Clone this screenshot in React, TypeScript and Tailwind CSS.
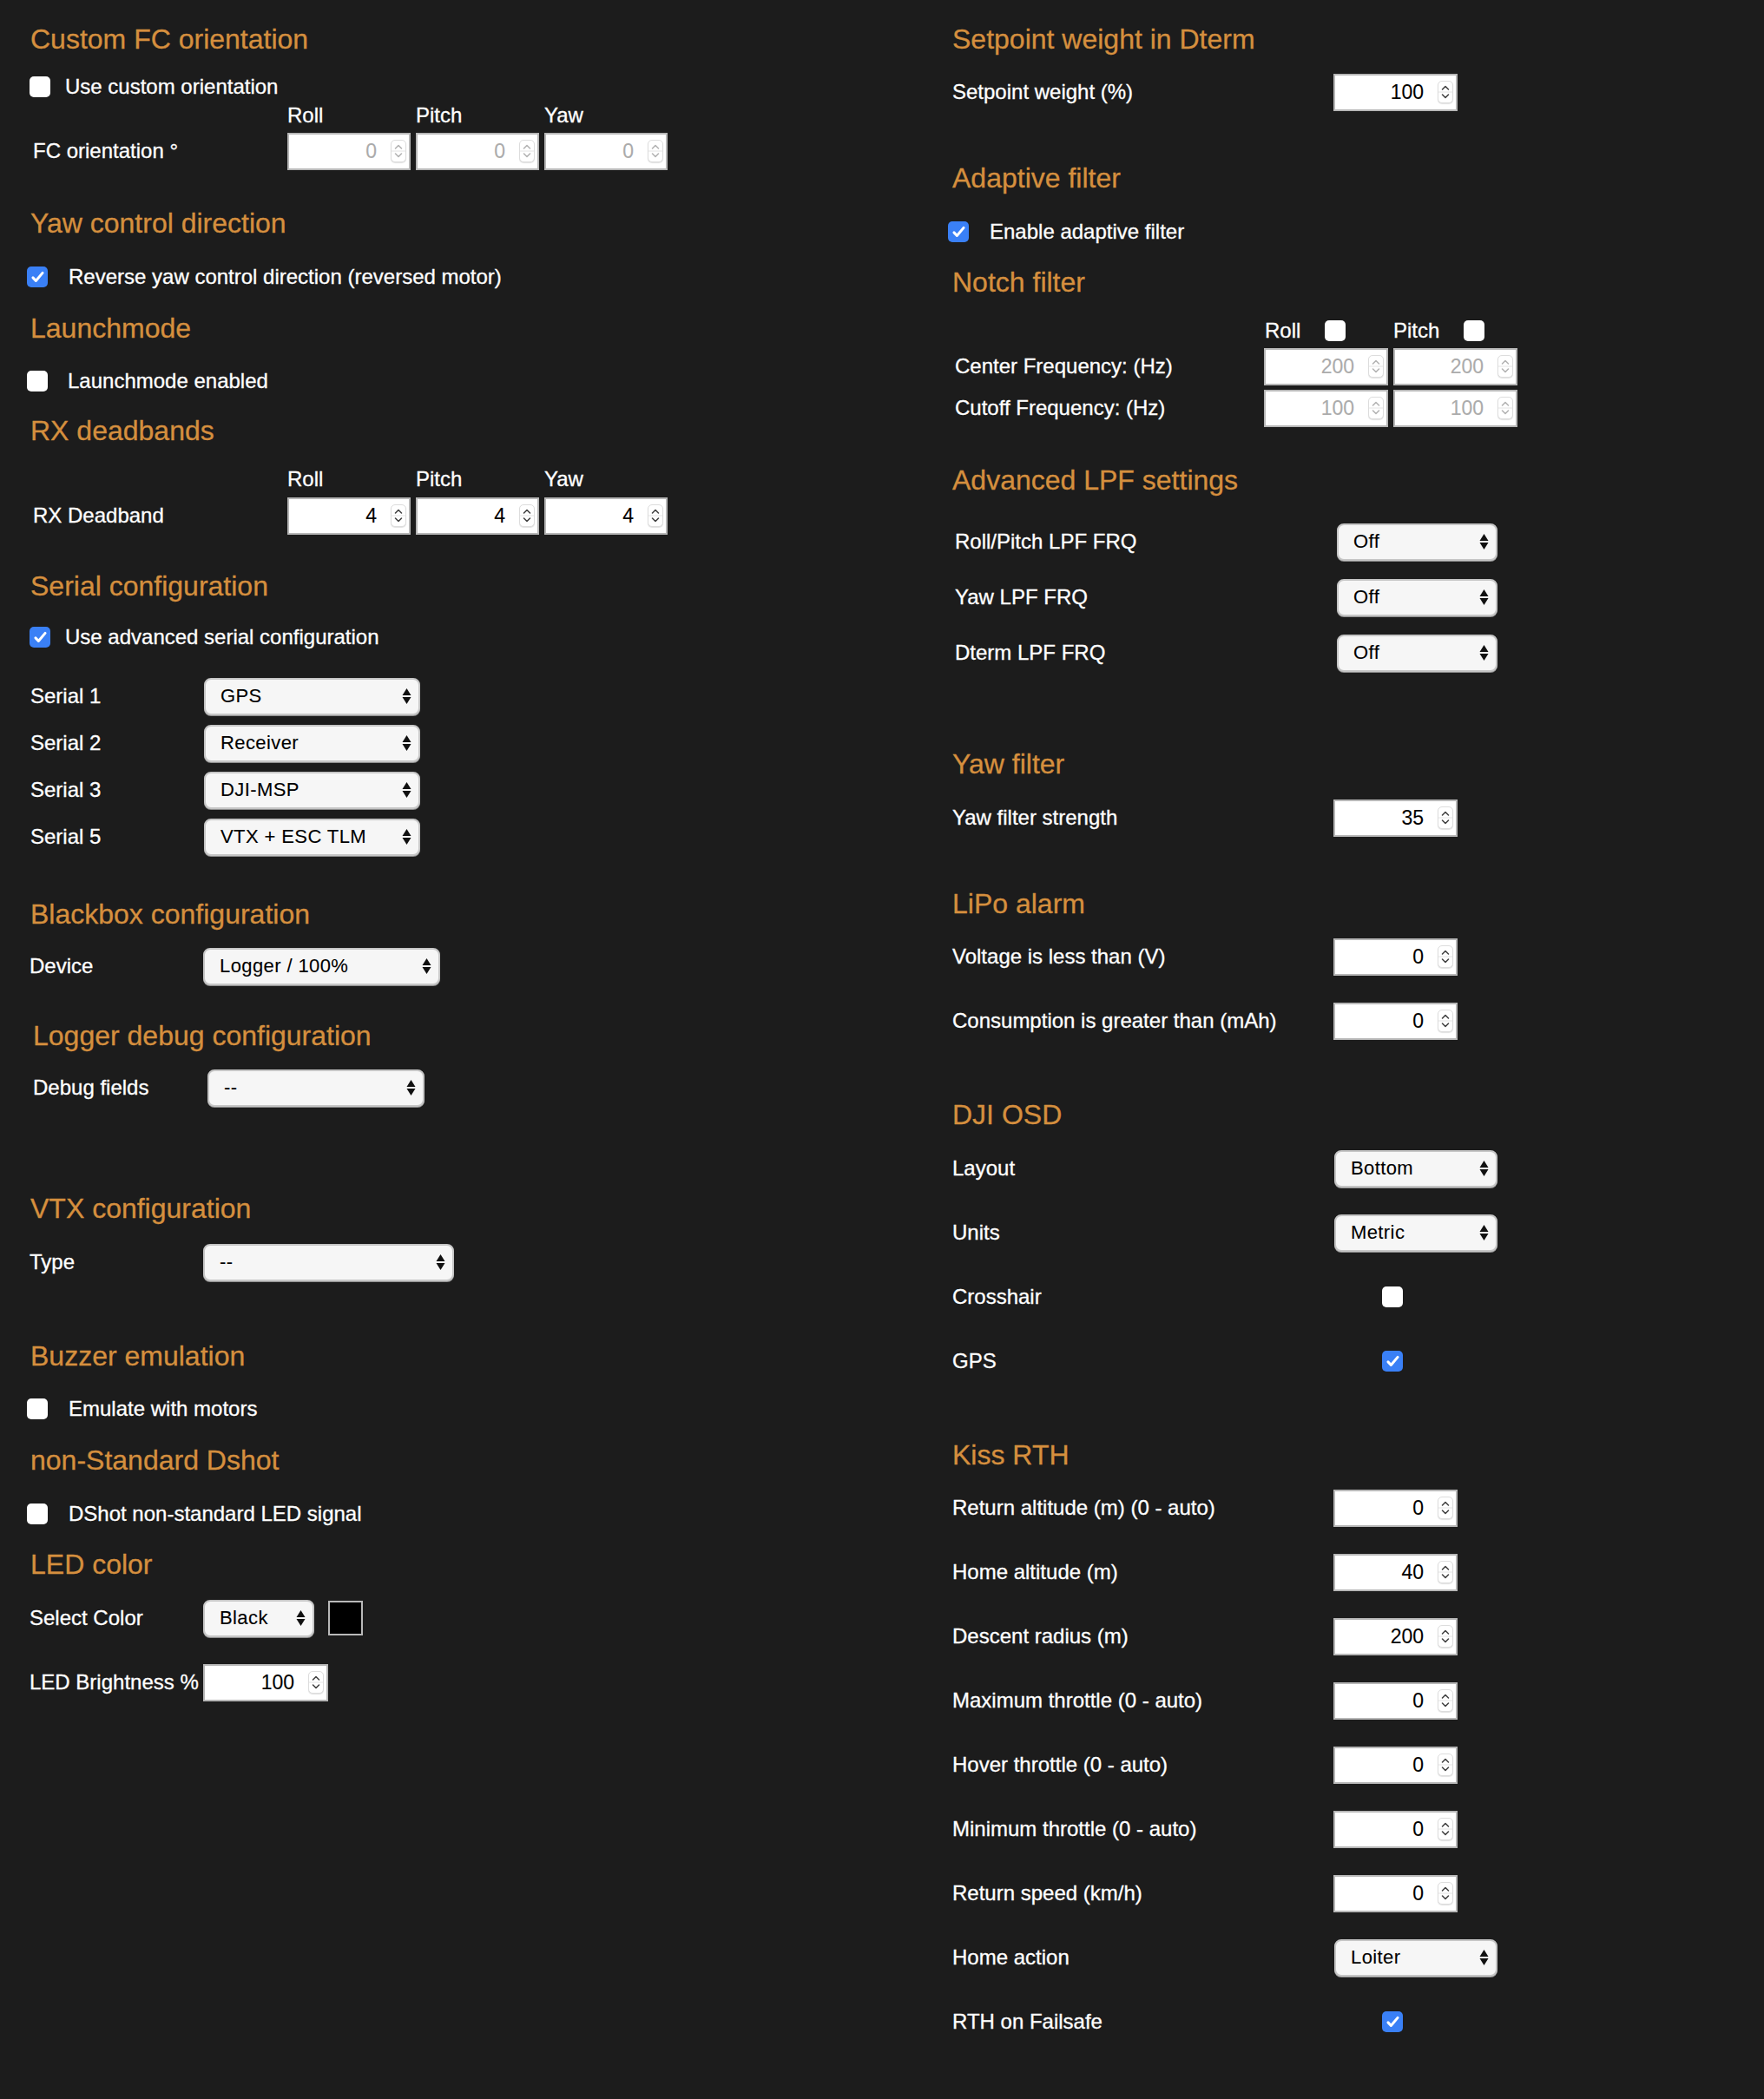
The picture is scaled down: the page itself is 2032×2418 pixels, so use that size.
import React from 'react'

function Check({ checked = false }: { checked?: boolean }) {
    if (checked) {
        return (
            <span className="flex h-[24px] w-[24px] shrink-0 items-center justify-center rounded-[5px] bg-[#3a80f6]">
                <svg viewBox="0 0 24 24" className="h-[19px] w-[19px]">
                    <path d="M5 12.5l4.3 4.5L19 5.5" fill="none" stroke="white" strokeWidth="3.8" strokeLinecap="round" strokeLinejoin="round" />
                </svg>
            </span>
        )
    }
    return <span className="block h-[24px] w-[24px] shrink-0 rounded-[5px] bg-white" />
}

function Spinner({ disabled = false }: { disabled?: boolean }) {
    const c = disabled ? '#b4b4b4' : '#444'
    return (
        <span className="block h-[26px] w-[18px] shrink-0 rounded-[5px] border border-[#dddddd] bg-white shadow-[0_1px_1px_rgba(0,0,0,0.12)]">
            <svg viewBox="0 0 16 24" className="block h-full w-full">
                <path d="M4.5 9L8 5.5 11.5 9" fill="none" stroke={c} strokeWidth="1.6" strokeLinecap="round" strokeLinejoin="round" />
                <line x1="0" y1="12" x2="16" y2="12" stroke="#e4e4e4" strokeWidth="1" />
                <path d="M4.5 15L8 18.5 11.5 15" fill="none" stroke={c} strokeWidth="1.6" strokeLinecap="round" strokeLinejoin="round" />
            </svg>
        </span>
    )
}

function NumInput({ value, disabled = false, w = 'w-[143px]' }: { value: string; disabled?: boolean; w?: string }) {
    return (
        <div className={`flex h-[43px] ${w} shrink-0 items-center justify-end border-2 border-[#b7b7b7] bg-white pr-[3px] [-webkit-text-stroke:0.1px]`}>
            <span className={`mr-[16px] text-[23px] leading-none ${disabled ? 'text-[#ababab]' : 'text-black'}`}>{value}</span>
            <Spinner disabled={disabled} />
        </div>
    )
}

function Select({ value, w }: { value: string; w: string }) {
    return (
        <div className={`flex h-[43px] ${w} shrink-0 items-center justify-between rounded-[8px] border-2 border-[#c6c6c6] bg-[#f6f6f6] pl-[17px] pr-[8px] text-[22px] leading-none tracking-[0.4px] text-black shadow-[0_1px_0_#8e8e8e] [-webkit-text-stroke:0.1px]`}>
            <span>{value}</span>
            <svg viewBox="0 0 11 20" className="h-[20px] w-[11px]">
                <path d="M5.5 1L10.5 9H0.5z M5.5 19L0.5 11h10z" fill="#111" />
            </svg>
        </div>
    )
}

function H({ children, mt, pl = 'pl-[35px]' }: { children: React.ReactNode; mt: string; pl?: string }) {
    return <h2 className={`${mt} ${pl} flex h-[40px] items-center whitespace-nowrap text-[32px] leading-none text-[#d58f3e]`}>{children}</h2>
}

function CheckRow({ label, checked = false, mt, pl, gap }: { label: string; checked?: boolean; mt: string; pl: string; gap: string }) {
    return (
        <div className={`${mt} ${pl} flex h-[30px] items-center ${gap} text-[24px] leading-none`}>
            <Check checked={checked} />
            <span className="whitespace-nowrap">{label}</span>
        </div>
    )
}

function Row({ label, mt, lw, children, h = 'h-[44px]' }: { label: string; mt: string; lw: string; children: React.ReactNode; h?: string }) {
    return (
        <div className={`${mt} flex ${h} items-center text-[24px] leading-none`}>
            <span className={`${lw} shrink-0 whitespace-nowrap`}>{label}</span>
            {children}
        </div>
    )
}

const axes = ['Roll', 'Pitch', 'Yaw']

function AxisLabels({ mt }: { mt: string }) {
    return (
        <div className={`${mt} flex h-[26px] items-center pl-[331px] text-[24px] leading-none`}>
            {axes.map(a => <span key={a} className="w-[148px]">{a}</span>)}
        </div>
    )
}

function LeftColumn() {
    return (
        <div className="w-[1090px] shrink-0">
            <H mt="mt-[25px]">Custom FC orientation</H>
            <CheckRow mt="mt-[20px]" pl="pl-[34px]" gap="gap-[17px]" label="Use custom orientation" />
            <AxisLabels mt="mt-[5px]" />
            <Row mt="mt-[6px]" lw="w-[331px] pl-[38px]" label="FC orientation °">
                <div className="flex gap-[6px]">
                    <NumInput value="0" disabled w="w-[142px]" />
                    <NumInput value="0" disabled w="w-[142px]" />
                    <NumInput value="0" disabled w="w-[142px]" />
                </div>
            </Row>

            <H mt="mt-[41px]">Yaw control direction</H>
            <CheckRow mt="mt-[27px]" pl="pl-[31px]" gap="gap-[24px]" label="Reverse yaw control direction (reversed motor)" checked />

            <H mt="mt-[24px]">Launchmode</H>
            <CheckRow mt="mt-[26px]" pl="pl-[31px]" gap="gap-[23px]" label="Launchmode enabled" />

            <H mt="mt-[22px]">RX deadbands</H>
            <AxisLabels mt="mt-[23px]" />
            <Row mt="mt-[7px]" lw="w-[331px] pl-[38px]" label="RX Deadband">
                <div className="flex gap-[6px]">
                    <NumInput value="4" w="w-[142px]" />
                    <NumInput value="4" w="w-[142px]" />
                    <NumInput value="4" w="w-[142px]" />
                </div>
            </Row>

            <H mt="mt-[39px]">Serial configuration</H>
            <CheckRow mt="mt-[24px]" pl="pl-[34px]" gap="gap-[17px]" label="Use advanced serial configuration" checked />
            <Row mt="mt-[31px]" lw="w-[235px] pl-[35px]" label="Serial 1"><Select value="GPS" w="w-[249px]" /></Row>
            <Row mt="mt-[10px]" lw="w-[235px] pl-[35px]" label="Serial 2"><Select value="Receiver" w="w-[249px]" /></Row>
            <Row mt="mt-[10px]" lw="w-[235px] pl-[35px]" label="Serial 3"><Select value="DJI-MSP" w="w-[249px]" /></Row>
            <Row mt="mt-[10px]" lw="w-[235px] pl-[35px]" label="Serial 5"><Select value="VTX + ESC TLM" w="w-[249px]" /></Row>

            <H mt="mt-[47px]">Blackbox configuration</H>
            <Row mt="mt-[18px]" lw="w-[234px] pl-[34px]" label="Device"><Select value="Logger / 100%" w="w-[273px]" /></Row>

            <H mt="mt-[38px]" pl="pl-[38px]">Logger debug configuration</H>
            <Row mt="mt-[18px]" lw="w-[239px] pl-[38px]" label="Debug fields"><Select value="--" w="w-[250px]" /></Row>

            <H mt="mt-[97px]">VTX configuration</H>
            <Row mt="mt-[20px]" lw="w-[234px] pl-[34px]" label="Type"><Select value="--" w="w-[289px]" /></Row>

            <H mt="mt-[66px]">Buzzer emulation</H>
            <CheckRow mt="mt-[26px]" pl="pl-[31px]" gap="gap-[24px]" label="Emulate with motors" />

            <H mt="mt-[24px]">non-Standard Dshot</H>
            <CheckRow mt="mt-[27px]" pl="pl-[31px]" gap="gap-[24px]" label="DShot non-standard LED signal" />

            <H mt="mt-[23px]">LED color</H>
            <Row mt="mt-[20px]" lw="w-[234px] pl-[34px]" label="Select Color">
                <Select value="Black" w="w-[128px]" />
                <span className="ml-[16px] block h-[40px] w-[40px] border-2 border-[#b9b9b9] bg-black" />
            </Row>
            <Row mt="mt-[30px]" lw="w-[234px] pl-[34px]" label="LED Brightness %">
                <NumInput value="100" w="w-[144px]" />
            </Row>
        </div>
    )
}

function RightColumn() {
    const num = 'w-[446px] pl-[7px]'
    const sel = 'w-[447px] pl-[7px]'
    const chk = 'w-[502px] pl-[7px]'
    return (
        <div className="flex-1">
            <H mt="mt-[25px]" pl="pl-[7px]">Setpoint weight in Dterm</H>
            <Row mt="mt-[19px]" lw={num} label="Setpoint weight (%)"><NumInput value="100" /></Row>

            <H mt="mt-[57px]" pl="pl-[7px]">Adaptive filter</H>
            <CheckRow mt="mt-[27px]" pl="pl-[2px]" gap="gap-[24px]" label="Enable adaptive filter" checked />

            <H mt="mt-[23px]" pl="pl-[7px]">Notch filter</H>
            <div className="mt-[23px] flex h-[26px] items-center pl-[367px] text-[24px] leading-none">
                <span className="w-[69px]">Roll</span>
                <Check />
                <span className="ml-[55px] w-[81px]">Pitch</span>
                <Check />
            </div>
            <Row mt="mt-[7px]" h="h-[42px]" lw="w-[366px] pl-[10px]" label="Center Frequency: (Hz)">
                <div className="flex gap-[6px]">
                    <NumInput value="200" disabled />
                    <NumInput value="200" disabled />
                </div>
            </Row>
            <Row mt="mt-[6px]" h="h-[42px]" lw="w-[366px] pl-[10px]" label="Cutoff Frequency: (Hz)">
                <div className="flex gap-[6px]">
                    <NumInput value="100" disabled />
                    <NumInput value="100" disabled />
                </div>
            </Row>

            <H mt="mt-[42px]" pl="pl-[7px]">Advanced LPF settings</H>
            <Row mt="mt-[29px]" lw="w-[450px] pl-[10px]" label="Roll/Pitch LPF FRQ"><Select value="Off" w="w-[185px]" /></Row>
            <Row mt="mt-[20px]" lw="w-[450px] pl-[10px]" label="Yaw LPF FRQ"><Select value="Off" w="w-[185px]" /></Row>
            <Row mt="mt-[20px]" lw="w-[450px] pl-[10px]" label="Dterm LPF FRQ"><Select value="Off" w="w-[185px]" /></Row>

            <H mt="mt-[86px]" pl="pl-[7px]">Yaw filter</H>
            <Row mt="mt-[20px]" lw={num} label="Yaw filter strength"><NumInput value="35" /></Row>

            <H mt="mt-[57px]" pl="pl-[7px]">LiPo alarm</H>
            <Row mt="mt-[19px]" lw={num} label="Voltage is less than (V)"><NumInput value="0" /></Row>
            <Row mt="mt-[30px]" lw={num} label="Consumption is greater than (mAh)"><NumInput value="0" /></Row>

            <H mt="mt-[66px]" pl="pl-[7px]">DJI OSD</H>
            <Row mt="mt-[20px]" lw={sel} label="Layout"><Select value="Bottom" w="w-[188px]" /></Row>
            <Row mt="mt-[30px]" lw={sel} label="Units"><Select value="Metric" w="w-[188px]" /></Row>
            <Row mt="mt-[30px]" lw={chk} label="Crosshair"><Check /></Row>
            <Row mt="mt-[30px]" lw={chk} label="GPS"><Check checked /></Row>

            <H mt="mt-[66px]" pl="pl-[7px]">Kiss RTH</H>
            <Row mt="mt-[19px]" lw={num} label="Return altitude (m) (0 - auto)"><NumInput value="0" /></Row>
            <Row mt="mt-[30px]" lw={num} label="Home altitude (m)"><NumInput value="40" /></Row>
            <Row mt="mt-[30px]" lw={num} label="Descent radius (m)"><NumInput value="200" /></Row>
            <Row mt="mt-[30px]" lw={num} label="Maximum throttle (0 - auto)"><NumInput value="0" /></Row>
            <Row mt="mt-[30px]" lw={num} label="Hover throttle (0 - auto)"><NumInput value="0" /></Row>
            <Row mt="mt-[30px]" lw={num} label="Minimum throttle (0 - auto)"><NumInput value="0" /></Row>
            <Row mt="mt-[30px]" lw={num} label="Return speed (km/h)"><NumInput value="0" /></Row>
            <Row mt="mt-[30px]" lw={sel} label="Home action"><Select value="Loiter" w="w-[188px]" /></Row>
            <Row mt="mt-[30px]" lw={chk} label="RTH on Failsafe"><Check checked /></Row>
        </div>
    )
}

export default function App() {
    return (
        <div className="flex min-h-[2418px] w-full bg-[#1c1c1c] font-['Liberation_Sans',Arial,sans-serif] text-white [-webkit-text-stroke:0.3px]">
            <LeftColumn />
            <RightColumn />
        </div>
    )
}
